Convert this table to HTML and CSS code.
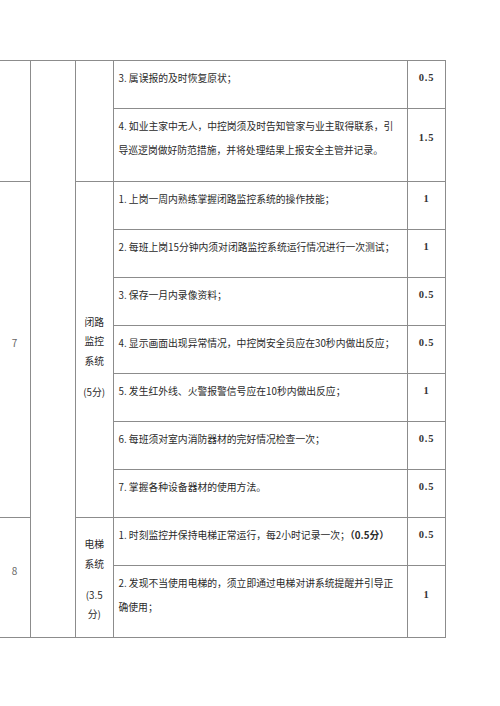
FILE: index.html
```html
<!DOCTYPE html>
<html lang="zh-CN">
<head>
<meta charset="utf-8">
<title>考核表</title>
<link rel="stylesheet" href="styles.css">
</head>
<body>
<table class="sheet">
  <colgroup>
    <col class="c-no">
    <col class="c-dept">
    <col class="c-cat">
    <col class="c-item">
    <col class="c-score">
  </colgroup>
  <tbody>
    <tr class="one">
      <td class="num" rowspan="2"></td>
      <td class="blank" rowspan="11"></td>
      <td class="cat" rowspan="2"></td>
      <td class="item">3. 属误报的及时恢复原状；</td>
      <td class="score">0.5</td>
    </tr>
    <tr class="two">
      <td class="item">4. 如业主家中无人，中控岗须及时告知管家与业主取得联系，引导巡逻岗做好防范措施，并将处理结果上报安全主管并记录。</td>
      <td class="score">1.5</td>
    </tr>
    <tr class="one">
      <td class="num" rowspan="7">7</td>
      <td class="cat cat-cctv" rowspan="7"><span class="cat-line">闭路</span><span class="cat-line">监控</span><span class="cat-line">系统</span><span class="cat-line cat-pts">(5分)</span></td>
      <td class="item">1. 上岗一周内熟练掌握闭路监控系统的操作技能；</td>
      <td class="score">1</td>
    </tr>
    <tr class="one">
      <td class="item">2. 每班上岗15分钟内须对闭路监控系统运行情况进行一次测试；</td>
      <td class="score">1</td>
    </tr>
    <tr class="one">
      <td class="item">3. 保存一月内录像资料；</td>
      <td class="score">0.5</td>
    </tr>
    <tr class="one">
      <td class="item">4. 显示画面出现异常情况，中控岗安全员应在30秒内做出反应；</td>
      <td class="score">0.5</td>
    </tr>
    <tr class="one">
      <td class="item">5. 发生红外线、火警报警信号应在10秒内做出反应；</td>
      <td class="score">1</td>
    </tr>
    <tr class="one">
      <td class="item">6. 每班须对室内消防器材的完好情况检查一次；</td>
      <td class="score">0.5</td>
    </tr>
    <tr class="one">
      <td class="item">7. 掌握各种设备器材的使用方法。</td>
      <td class="score">0.5</td>
    </tr>
    <tr class="one">
      <td class="num" rowspan="2">8</td>
      <td class="cat cat-lift" rowspan="2"><span class="cat-line">电梯</span><span class="cat-line">系统</span><span class="cat-line cat-pts">(3.5</span><span class="cat-line">分)</span></td>
      <td class="item">1. 时刻监控并保持电梯正常运行，每2小时记录一次；<b class="em">（0.5分）</b></td>
      <td class="score">0.5</td>
    </tr>
    <tr class="two">
      <td class="item">2. 发现不当使用电梯的，须立即通过电梯对讲系统提醒并引导正确使用；</td>
      <td class="score">1</td>
    </tr>
  </tbody>
</table>
</body>
</html>
```

FILE: styles.css
```css
html, body {
  margin: 0;
  padding: 0;
  background: #ffffff;
}

body {
  font-family: "Noto Sans CJK SC", "Noto Sans", sans-serif;
  color: #2a2a2a;
}

.sheet {
  border-collapse: collapse;
  table-layout: fixed;
  width: 447px;
  margin: 60px 0 0 -2px;
}

.c-no { width: 32px; }
.c-dept { width: 45px; }
.c-cat { width: 37.5px; }
.c-item { width: 294.5px; }
.c-score { width: 38px; }

.sheet td {
  border: 1px solid #8c8c8c;
  padding: 0;
}

.one { height: 48px; }
.two { height: 72.5px; }

.item {
  padding: 5px 6px 18px 5px !important;
  font-size: 9.8px;
  line-height: 24px;
  vertical-align: top;
  text-align: left;
}

.em {
  font-weight: bold;
}

.score {
  padding: 5px 0 18px !important;
  text-align: center;
  vertical-align: middle;
  font-family: "Liberation Serif", "Noto Sans CJK SC", serif;
  font-weight: bold;
  font-size: 10.5px;
  line-height: 24px;
  letter-spacing: 0.8px;
  color: #333;
  border-left-color: #444 !important;
}

.num {
  padding: 5px 0 18px !important;
  text-align: center;
  vertical-align: middle;
  font-size: 10px;
  line-height: 24px;
  color: #666;
}

.cat {
  text-align: center;
  vertical-align: middle;
  font-size: 9.8px;
  line-height: 19.3px;
}

.cat-cctv { padding-top: 17px !important; }
.cat-lift { padding-top: 5.5px !important; }

.cat-line {
  display: block;
}

.cat-pts {
  margin-top: 12px;
}
```
